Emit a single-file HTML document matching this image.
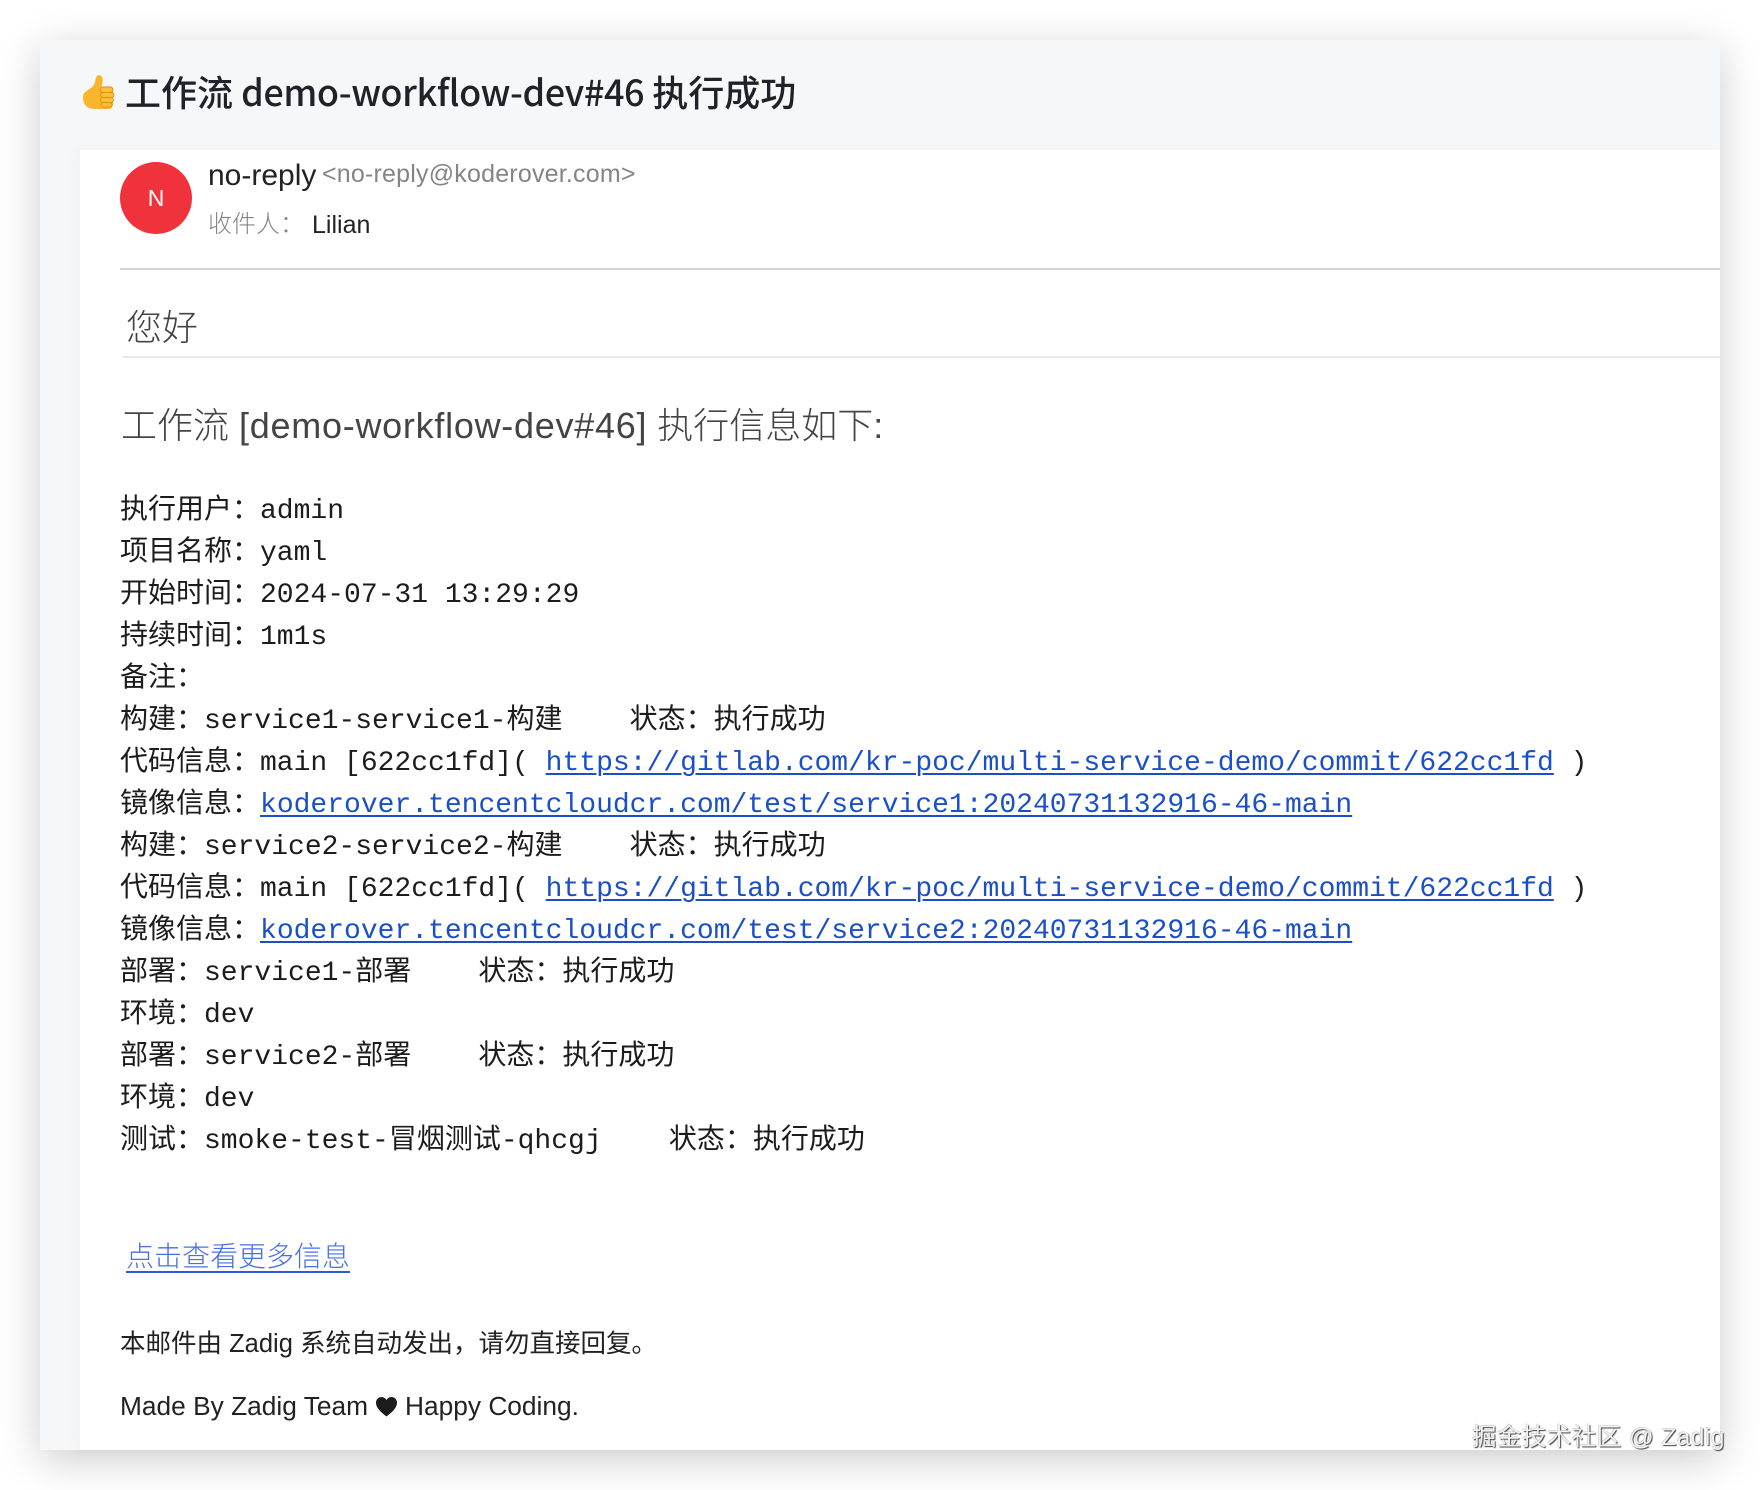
<!DOCTYPE html>
<html lang="zh">
<head>
<meta charset="utf-8">
<title>工作流 demo-workflow-dev#46 执行成功</title>
<style>
html,body{margin:0;padding:0;background:#fff;}
body{width:1760px;height:1490px;position:relative;overflow:hidden;font-family:"Liberation Sans","Noto Sans CJK SC",sans-serif;color:#222;}
.card{position:absolute;left:40px;top:40px;width:1680px;height:1410px;background:#f6f7f9;box-shadow:0 10px 40px rgba(0,0,0,.2);}
.panel{position:absolute;left:80px;top:150px;width:1640px;height:1300px;background:#fff;box-shadow:-6px 0 14px rgba(0,0,0,.025);}
.a{position:absolute;white-space:pre;}
.hr{position:absolute;height:2px;}
.m{font-family:"Liberation Mono","Noto Sans CJK SC",monospace;font-size:28px;line-height:42px;height:42px;left:120px;color:#1c1c1c;}
.m a{color:#1a4fc8;text-decoration:underline;text-decoration-thickness:2px;text-underline-offset:3px;}
.thin{font-weight:200;color:#444;}
</style>
</head>
<body>
<div class="card"></div>
<div class="panel"></div>

<svg style="position:absolute;left:76px;top:68px" width="44" height="44" viewBox="0 0 44 44">
  <path d="M7 29c0-3 1.500-5 4-6.500 3-1.800 6-3.500 7.500-7 .8-2 1-4.500 1.500-6 .6-1.800 2.500-2.800 4-2.200 2 .8 2.800 3 2.600 5.700-.2 2.500-1 4.700-1.300 6.500H33c2.500 0 4 1.500 4 3.500v13c0 3-2 5-5 5H19c-3 0-5-.5-7-1.500-3-1.800-5-5-5-10.500z" fill="#f9b52e"/>
  <rect x="24" y="19" width="13" height="5.500" rx="2.700" fill="#fbbf35" stroke="#e0900f" stroke-width=".9"/>
  <rect x="24.500" y="24.500" width="13.500" height="5" rx="2.500" fill="#fbbf35" stroke="#e0900f" stroke-width=".9"/>
  <rect x="24.500" y="29.500" width="13" height="5" rx="2.500" fill="#fbbf35" stroke="#e0900f" stroke-width=".9"/>
  <rect x="25" y="34.500" width="11" height="4.500" rx="2.200" fill="#fbbf35" stroke="#e0900f" stroke-width=".9"/>
</svg>

<div class="a" style="left:125px;top:65px;font-size:36px;line-height:52px;font-weight:500;color:#1f2329;font-family:'Noto Sans CJK SC','Liberation Sans',sans-serif">工作流 <span style="letter-spacing:-.42px">demo-workflow-dev#46</span> 执行成功</div>

<div class="a" style="left:120px;top:162px;width:72px;height:72px;border-radius:50%;background:#f0323c;color:#fff;font-size:23px;line-height:72px;text-align:center">N</div>
<div class="a" style="left:208px;top:158px;font-size:30px;line-height:36px;color:#222">no-reply</div>
<div class="a" style="left:322px;top:158px;font-size:25px;line-height:32px;letter-spacing:.2px;color:#858585">&lt;no-reply@koderover.com&gt;</div>
<div class="a" style="left:208px;top:207px;font-size:24px;line-height:36px;color:#858585;font-weight:200">收件人：</div>
<div class="a" style="left:312px;top:207px;font-size:25px;line-height:36px;color:#222">Lilian</div>
<div class="hr" style="left:120px;top:268px;width:1600px;background:#d4d4d4"></div>

<div class="a thin" style="left:126px;top:301px;font-size:36px;line-height:54px">您好</div>
<div class="hr" style="left:122px;top:356px;width:1598px;background:#e9e9e9"></div>
<div class="a thin" style="left:121px;top:399px;font-size:36px;line-height:54px">工作流 <span style="letter-spacing:.73px">[demo-workflow-dev#46]</span> 执行信息如下:</div>

<div class="a m" style="top:491px">执行用户：admin</div>
<div class="a m" style="top:533px">项目名称：yaml</div>
<div class="a m" style="top:575px">开始时间：2024-07-31 13:29:29</div>
<div class="a m" style="top:617px">持续时间：1m1s</div>
<div class="a m" style="top:659px">备注：</div>
<div class="a m" style="top:701px">构建：service1-service1-构建    状态：执行成功</div>
<div class="a m" style="top:743px">代码信息：main [622cc1fd]( <a href="#">https://gitlab.com/kr-poc/multi-service-demo/commit/622cc1fd</a> )</div>
<div class="a m" style="top:785px">镜像信息：<a href="#">koderover.tencentcloudcr.com/test/service1:20240731132916-46-main</a></div>
<div class="a m" style="top:827px">构建：service2-service2-构建    状态：执行成功</div>
<div class="a m" style="top:869px">代码信息：main [622cc1fd]( <a href="#">https://gitlab.com/kr-poc/multi-service-demo/commit/622cc1fd</a> )</div>
<div class="a m" style="top:911px">镜像信息：<a href="#">koderover.tencentcloudcr.com/test/service2:20240731132916-46-main</a></div>
<div class="a m" style="top:953px">部署：service1-部署    状态：执行成功</div>
<div class="a m" style="top:995px">环境：dev</div>
<div class="a m" style="top:1037px">部署：service2-部署    状态：执行成功</div>
<div class="a m" style="top:1079px">环境：dev</div>
<div class="a m" style="top:1121px">测试：smoke-test-冒烟测试-qhcgj    状态：执行成功</div>

<a class="a" href="#" style="left:126px;top:1236px;font-size:28px;line-height:42px;font-weight:200;color:#4a6fe3;text-decoration:none;border-bottom:2px solid #2f5ad6;height:35px">点击查看更多信息</a>

<div class="a" style="left:120px;top:1326px;font-size:25.500px;line-height:36px;color:#222">本邮件由 Zadig 系统自动发出，请勿直接回复。</div>
<div class="a" style="left:120px;top:1388px;font-size:26.300px;line-height:36px;color:#222">Made By Zadig Team</div>
<svg style="position:absolute;left:375px;top:1396px" width="23" height="21" viewBox="0 0 23 21"><path d="M11.500 20.500C7 17 1 12.500 1 6.800 1 3.300 3.600 1 6.500 1c2.200 0 4 1.200 5 3 1-1.800 2.800-3 5-3C19.400 1 22 3.300 22 6.800c0 5.700-6 10.200-10.500 13.700z" fill="#1c1c1c"/></svg>
<div class="a" style="left:405px;top:1388px;font-size:26.300px;line-height:36px;color:#222">Happy Coding.</div>

<div class="a" style="left:1472px;top:1420px;font-size:24.500px;line-height:36px;letter-spacing:.43px;color:#f2f2f2;text-shadow:1px 1px 1px rgba(0,0,0,.75),-.5px -.5px 0 rgba(0,0,0,.25)">掘金技术社区 @ Zadig</div>
</body>
</html>
